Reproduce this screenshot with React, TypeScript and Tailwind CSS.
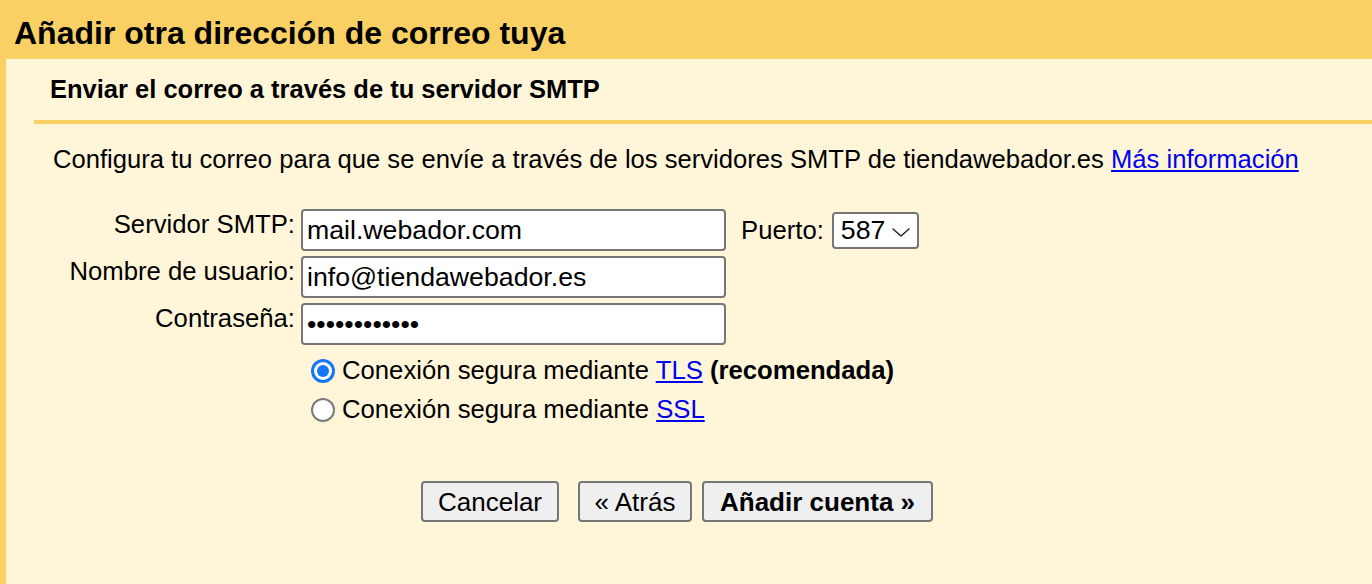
const labelCls = 'text-right text-[25.7px] leading-[30px] pr-[6px]'
const inputCls =
  'w-[425px] h-[42px] bg-white border-2 border-[#767676] rounded-[4px] px-[4px] text-[26.7px] outline-none'

function Radio({ checked }: { checked?: boolean }) {
  return checked ? (
    <span className="w-[24px] h-[24px] rounded-full bg-[#1677f6] flex items-center justify-center">
      <span className="w-[18px] h-[18px] rounded-full bg-white flex items-center justify-center">
        <span className="w-[12px] h-[12px] rounded-full bg-[#1677f6]" />
      </span>
    </span>
  ) : (
    <span className="w-[24px] h-[24px] rounded-full bg-white border-2 border-[#7a7a7a]" />
  )
}

export default function App() {
  return (
    <div className="w-[1372px] h-[584px] overflow-hidden bg-[#fff6d9] text-black font-['Liberation_Sans',Arial,sans-serif]">
      {/* Title bar */}
      <div className="h-[59px] bg-[#f9d064] flex items-center pl-[14px] pt-[7px] text-[32px] font-bold">
        Añadir otra dirección de correo tuya
      </div>

      <div className="h-[525px] border-l-[6px] border-[#f9d064]">
        {/* Subtitle */}
        <div className="h-[61px] flex items-center pl-[44px] text-[25.5px] font-bold">
          Enviar el correo a través de tu servidor SMTP
        </div>
        <div className="ml-[28px] h-[4px] bg-[#f9d064]" />

        {/* Description */}
        <p className="mt-[20px] pl-[47px] text-[25.6px] leading-[30px]">
          Configura tu correo para que se envíe a través de los servidores SMTP de tiendawebador.es{' '}
          <a href="#" className="text-[#0000ee] underline">Más información</a>
        </p>

        {/* Form */}
        <div className="mt-[35px] grid grid-cols-[295px_auto] gap-y-[5px]">
          <div className={labelCls}>Servidor SMTP:</div>
          <div className="flex items-center">
            <input className={inputCls} defaultValue="mail.webador.com" />
            <span className="ml-[15px] text-[25.7px]">Puerto:</span>
            <div className="relative ml-[8px] w-[87px] h-[37px] bg-white border-2 border-[#767676] rounded-[4px] flex items-center pl-[7px] text-[26.7px]">
              587
              <svg className="absolute right-[7px] top-[14px]" width="18" height="9" viewBox="0 0 18 9" fill="none">
                <polyline points="1,1 9,8 17,1" stroke="#222" strokeWidth="1.5" strokeLinecap="round" strokeLinejoin="round" />
              </svg>
            </div>
          </div>

          <div className={labelCls}>Nombre de usuario:</div>
          <div>
            <input className={inputCls} defaultValue="info@tiendawebador.es" />
          </div>

          <div className={labelCls}>Contraseña:</div>
          <div>
            <input type="password" className={inputCls} defaultValue="............" />
          </div>
        </div>

        {/* Security options */}
        <div className="mt-[6px] pl-[305px] text-[25.7px]">
          <div className="h-[39px] flex items-center gap-[7px]">
            <Radio checked />
            <span>
              Conexión segura mediante{' '}
              <a href="#" className="text-[#0000ee] underline">TLS</a>{' '}
              <b>(recomendada)</b>
            </span>
          </div>
          <div className="h-[39px] flex items-center gap-[7px]">
            <Radio />
            <span>
              Conexión segura mediante{' '}
              <a href="#" className="text-[#0000ee] underline">SSL</a>
            </span>
          </div>
        </div>

        {/* Buttons */}
        <div className="mt-[52px] pl-[415px] flex text-[26px]">
          <button className="w-[138px] h-[41px] bg-[#efefef] border-2 border-[#767676] rounded-[4px]">
            Cancelar
          </button>
          <button className="ml-[19px] w-[114px] h-[41px] bg-[#efefef] border-2 border-[#767676] rounded-[4px]">
            « Atrás
          </button>
          <button className="ml-[10px] w-[231px] h-[41px] bg-[#efefef] border-2 border-[#767676] rounded-[4px] font-bold">
            Añadir cuenta »
          </button>
        </div>
      </div>
    </div>
  )
}
